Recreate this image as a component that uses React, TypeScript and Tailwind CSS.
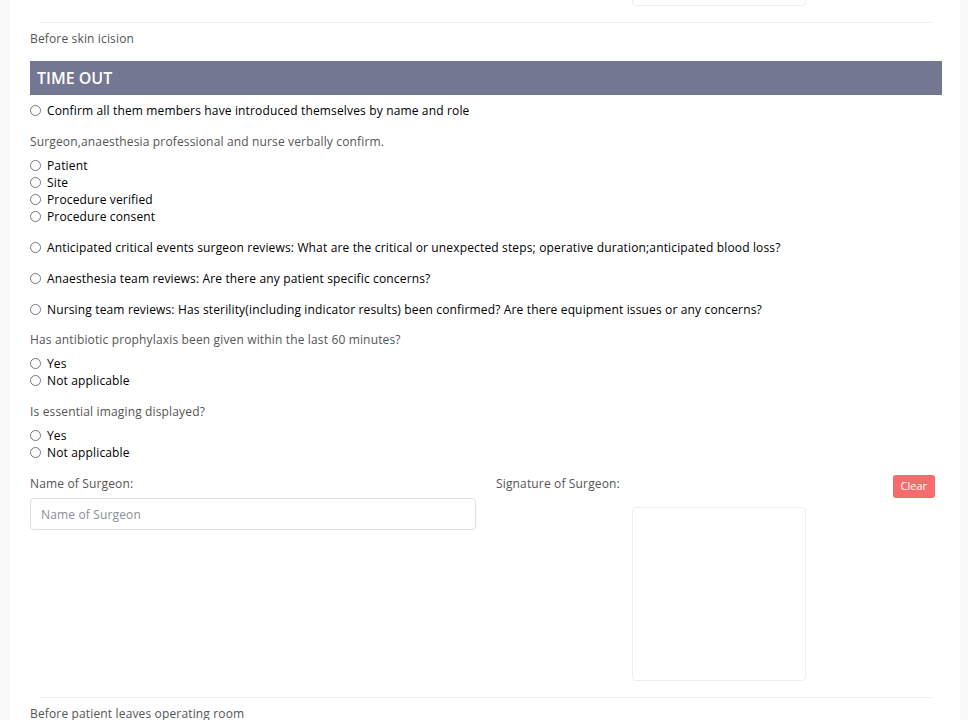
const font = { fontFamily: "'Open Sans', 'Liberation Sans', sans-serif" }

const confirmItems = ["Patient", "Site", "Procedure verified", "Procedure consent"]

const reviews = [
  "Anticipated critical events surgeon reviews: What are the critical or unexpected steps; operative duration;anticipated blood loss?",
  "Anaesthesia team reviews: Are there any patient specific concerns?",
  "Nursing team reviews: Has sterility(including indicator results) been confirmed? Are there equipment issues or any concerns?",
]

function Radio({ label, name }: { label: string; name: string }) {
  return (
    <label className="flex h-[17px] items-center text-[12px] font-medium tracking-[0.15px] text-black">
      <input type="radio" name={name} className="m-0 mr-[6px] h-[11px] w-[11px]" />
      {label}
    </label>
  )
}

function Note({ children, className = "" }: { children: React.ReactNode; className?: string }) {
  return (
    <p className={`flex h-[17px] items-center text-[12px] tracking-[0.15px] text-[#555] ${className}`}>
      {children}
    </p>
  )
}

export default function App() {
  return (
    <div className="min-h-[720px] bg-[#f9f9fa] pl-[10px] pr-[8px]" style={font}>
      <div className="min-h-[720px] bg-white pl-5 pr-[18px]">
        {/* tail of the previous signature pad */}
        <div className="grid grid-cols-2 gap-5">
          <div />
          <div className="flex justify-center">
            <div className="h-[6px] w-[174px] rounded-b border border-t-0 border-[#eceef1]" />
          </div>
        </div>
        <hr className="mx-[10px] mt-4 border-[#eceef1]" />
        <Note className="mt-[7px]">Before skin icision</Note>

        <div className="mt-[14px] flex h-[34px] items-center bg-[#737791] px-[7px] text-[16px] font-semibold text-white">
          TIME OUT
        </div>

        <div className="mt-[7px]">
          <Radio name="intro" label="Confirm all them members have introduced themselves by name and role" />
        </div>

        <Note className="mt-[14px]">Surgeon,anaesthesia professional and nurse verbally confirm.</Note>
        <div className="mt-[7px]">
          {confirmItems.map((item) => (
            <Radio key={item} name="confirm" label={item} />
          ))}
        </div>

        {reviews.map((r) => (
          <div key={r} className="mt-[14px]">
            <Radio name={r} label={r} />
          </div>
        ))}

        <Note className="mt-[13px]">Has antibiotic prophylaxis been given within the last 60 minutes?</Note>
        <div className="mt-[7px]">
          <Radio name="antibiotic" label="Yes" />
          <Radio name="antibiotic" label="Not applicable" />
        </div>

        <Note className="mt-[14px]">Is essential imaging displayed?</Note>
        <div className="mt-[7px]">
          <Radio name="imaging" label="Yes" />
          <Radio name="imaging" label="Not applicable" />
        </div>

        <div className="mt-[14px] grid grid-cols-2 gap-5">
          <div>
            <Note>Name of Surgeon:</Note>
            <input
              placeholder="Name of Surgeon"
              className="mt-[6px] h-[32px] w-full rounded border border-[#dcdfe6] px-[10px] text-[12px] tracking-[0.15px] outline-none placeholder:text-[#8a8f99]"
              style={font}
            />
          </div>
          <div>
            <div className="flex items-start justify-between">
              <Note>Signature of Surgeon:</Note>
              <button className="mr-[7px] h-[23px] rounded-[3px] bg-[#f56c6c] px-[8px] text-[11px] text-white">
                Clear
              </button>
            </div>
            <div className="mt-[9px] flex justify-center">
              <div className="h-[174px] w-[174px] rounded border border-[#eceef1]" />
            </div>
          </div>
        </div>

        <hr className="mx-[10px] mt-4 border-[#eceef1]" />
        <Note className="mt-[7px]">Before patient leaves operating room</Note>
      </div>
    </div>
  )
}
